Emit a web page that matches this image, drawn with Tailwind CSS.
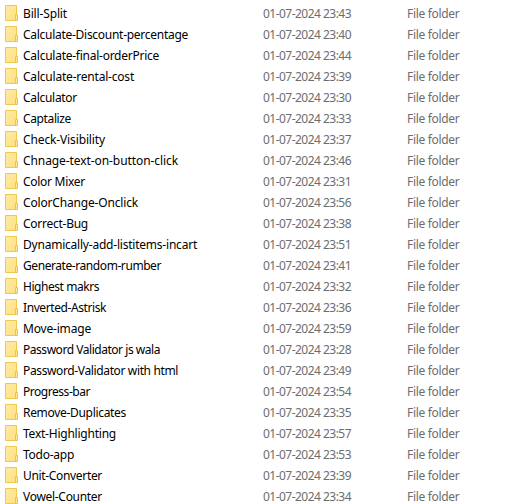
<!DOCTYPE html>
<html lang="en">
<head>
<meta charset="utf-8">
<title>Folders</title>
<script src="https://cdn.jsdelivr.net/npm/@tailwindcss/browser@4"></script>
</head>
<body class="bg-white overflow-hidden">
<svg class="absolute w-0 h-0">
  <defs>
    <linearGradient id="paper" x1="0" y1="0" x2="1" y2="1"><stop offset="0" stop-color="#ffeba6"/><stop offset="1" stop-color="#ffe080"/></linearGradient>
  </defs>
</svg>
<main id="list" class="h-[504px] overflow-hidden pt-[3px] font-['Noto_Sans','Open_Sans',sans-serif] text-[12px] leading-[21px] whitespace-nowrap"></main>
<template id="row">
  <div class="flex h-[21px] pl-[5px]">
    <svg class="mt-[2px] w-[13px] h-[16px] shrink-0" viewBox="0 0 13 16"><path d="M.5.5h11v15H.5z" fill="url(#paper)" stroke="#edc950"/><path d="M10.5 9.5h2v6h-2z" fill="#ffe894" stroke="#e9c450"/></svg>
    <div class="ml-[5px] w-[240px] shrink-0 text-black"><span></span></div>
    <div class="w-[144px] shrink-0 text-[#6d6d6d]"><span></span></div>
    <div class="shrink-0 text-[#6d6d6d]"><span></span></div>
  </div>
</template>
<script>
  // name, width of the name in pixels, minutes of the modification time
  const folders = [
    ['Bill-Split', 44, 43], ['Calculate-Discount-percentage', 165, 40],
    ['Calculate-final-orderPrice', 136, 44], ['Calculate-rental-cost', 111, 39],
    ['Calculator', 54, 30], ['Captalize', 48, 33], ['Check-Visibility', 82, 37],
    ['Chnage-text-on-button-click', 155, 46], ['Color Mixer', 62, 31],
    ['ColorChange-Onclick', 115, 56], ['Correct-Bug', 65, 38],
    ['Dynamically-add-listitems-incart', 174, 51], ['Generate-random-rumber', 138, 41],
    ['Highest makrs', 76, 32], ['Inverted-Astrisk', 83, 36], ['Move-image', 68, 59],
    ['Password Validator js wala', 137, 28], ['Password-Validator with html', 155, 49],
    ['Progress-bar', 67, 54], ['Remove-Duplicates', 103, 35],
    ['Text-Highlighting', 93, 57], ['Todo-app', 51, 53],
    ['Unit-Converter', 79, 39], ['Vowel-Counter', 79, 34]
  ];
  const list = document.getElementById('list');
  const row = document.getElementById('row');
  for (const [name, width, minute] of folders) {
    const node = row.content.cloneNode(true);
    const texts = [[name, width], ['01-07-2024 23:' + minute, 88], ['File folder', 52.3]];
    node.querySelectorAll('span').forEach((cell, i) => {
      cell.textContent = texts[i][0];
      cell.dataset.width = texts[i][1];
    });
    list.append(node);
  }
  // Spread each text over its given width once the styles are in force
  function fit() {
    for (const cell of list.querySelectorAll('span')) {
      cell.style.letterSpacing = '0px';
      const slack = cell.dataset.width - cell.getBoundingClientRect().width;
      cell.style.letterSpacing = slack / cell.textContent.length + 'px';
    }
  }
  window.addEventListener('load', fit);
</script>
</body>
</html>
